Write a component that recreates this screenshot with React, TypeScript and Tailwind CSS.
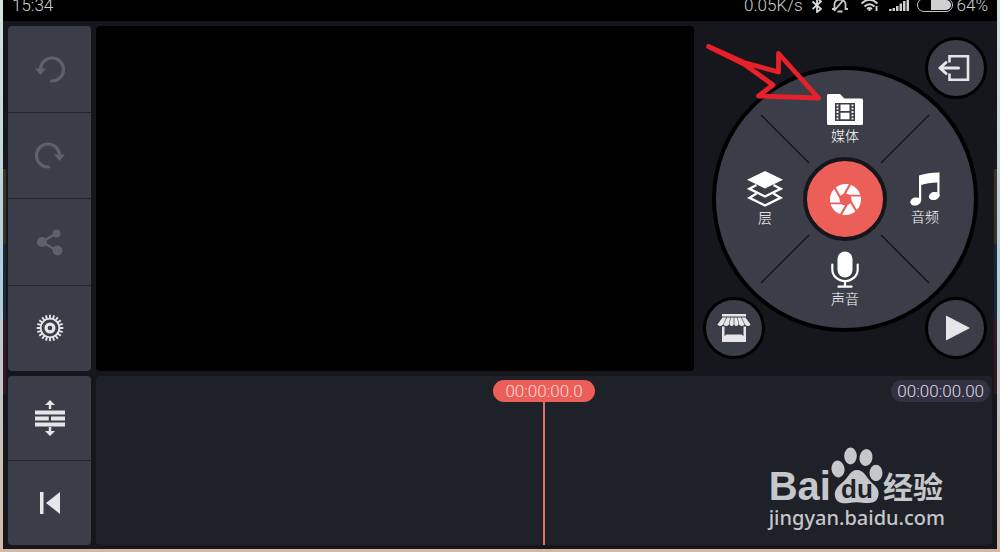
import type { ReactNode } from "react";

function RotateIcon({ flip = false }: { flip?: boolean }) {
  return (
    <svg width="32" height="32" viewBox="0 0 32 32" className={flip ? "-scale-x-100" : ""} aria-hidden="true">
      <path d="M6.500 16.500A11.500 11.500 0 1 1 17.500 28" fill="none" stroke="currentColor" strokeWidth="3.200" strokeLinecap="round" />
      <path d="M1 15.500h11l-5.500 6.500z" fill="currentColor" />
    </svg>
  );
}

function ShareIcon() {
  return (
    <svg width="28" height="28" viewBox="0 0 28 28" fill="currentColor" aria-hidden="true">
      <path d="M20 5.500L6 14L21 22.500" fill="none" stroke="currentColor" strokeWidth="2.500" />
      <circle cx="20.500" cy="5.500" r="4" />
      <circle cx="6" cy="14" r="5" />
      <circle cx="21.500" cy="22.500" r="5" />
    </svg>
  );
}

const teeth = Array.from({ length: 20 }, (_, i) => i * 18);

function GearIcon() {
  return (
    <svg width="28" height="28" viewBox="0 0 28 28" fill="none" stroke="currentColor" aria-hidden="true">
      <circle cx="14" cy="14" r="9.300" strokeWidth="1.800" />
      {teeth.map((a) => (
        <path key={a} d="M14 0.700V4.500" strokeWidth="1.900" transform={`rotate(${a} 14 14)`} />
      ))}
      <circle cx="14" cy="14" r="3.900" strokeWidth="3.200" />
    </svg>
  );
}

function TracksIcon() {
  return (
    <svg width="30" height="36" viewBox="0 0 30 36" fill="currentColor" aria-hidden="true">
      <path d="M15 0l5 5h-3.800v4h-2.400V5H10zM15 36l5-5h-3.800v-4h-2.400v4H10z" />
      <path d="M0 10.500h30v4H0zM0 16.500h13.800v4H0zM16 16.500h14v4H16zM0 22.500h30v4H0z" />
    </svg>
  );
}

function StartIcon() {
  return (
    <svg width="22" height="22" viewBox="0 0 22 22" fill="currentColor" aria-hidden="true">
      <path d="M1 0h3.500v22H1zM21 0v22L7 11z" />
    </svg>
  );
}

function MediaIcon() {
  return (
    <svg width="36" height="31" viewBox="0 0 36 31" aria-hidden="true">
      <path d="M1.500 0h11.500l4.500 4.500h17q1.500 0 1.500 1.500v23.500q0 1.500-1.500 1.500h-33q-1.500 0-1.500-1.500v-28q0-1.500 1.500-1.500z" fill="#fff" />
      <path d="M8 9h20v18H8z" fill="#3b3e48" />
      <path d="M13.500 10.500h9v6.500h-9zM13.500 18.800h9v6.500h-9z" fill="#fff" />
      <path d="M10.500 10.500v15.500M25.500 10.500v15.500" stroke="#fff" strokeWidth="1.800" strokeDasharray="1.800 1.500" />
    </svg>
  );
}

function LayersIcon() {
  return (
    <svg width="36" height="36" viewBox="0 0 36 36" fill="none" stroke="#fff" strokeWidth="2.400" aria-hidden="true">
      <path d="M18 0L36 8.800L18 17.600L0 8.800z" fill="#fff" stroke="none" />
      <path d="M9.500 14L2.500 17.800L18 25.500L33.500 17.800L26.500 14" />
      <path d="M9.500 22.500L2.500 26.800L18 34.500L33.500 26.800L26.500 22.500" />
    </svg>
  );
}

function MusicIcon() {
  return (
    <svg width="30" height="34" viewBox="0 0 30 34" fill="#fff" aria-hidden="true">
      <path d="M9 3.500Q18 0.500 29.500 0.500V24H27.300V10.500Q18 10.500 11.200 13V29H9z" />
      <ellipse cx="5.600" cy="29.500" rx="5.400" ry="4" transform="rotate(-14 5.600 29.500)" />
      <ellipse cx="24.200" cy="24" rx="5.400" ry="4" transform="rotate(-14 24.200 24)" />
    </svg>
  );
}

function MicIcon() {
  return (
    <svg width="28" height="37" viewBox="0 0 28 37" aria-hidden="true">
      <rect x="6.500" y="0.500" width="15" height="26" rx="7.500" fill="#fff" />
      <path d="M1.300 13.500V18.500a12.700 11.500 0 0 0 25.400 0V13.500M14 30V35.500M7.500 35.700h13" fill="none" stroke="#fff" strokeWidth="2.200" strokeLinecap="round" />
    </svg>
  );
}

function ShutterIcon() {
  return (
    <svg width="31" height="31" viewBox="2 2 20 20" fill="#fff" aria-hidden="true">
      <path d="M9.400 10.500l4.770-8.260C13.470 2.090 12.750 2 12 2c-2.400 0-4.600.85-6.320 2.250l3.660 6.350.06-.1zM21.540 9c-.92-2.920-3.150-5.260-6-6.340L11.880 9h9.660zm.26 1h-7.490l.29.5 4.760 8.250C21 16.970 22 14.610 22 12c0-.69-.07-1.350-.2-2zM8.540 12l-3.900-6.750C3.010 7.030 2 9.390 2 12c0 .69.070 1.350.2 2h7.490l-1.150-2zm-6.080 3c.92 2.920 3.150 5.260 6 6.340L12.120 15H2.460zm11.270 0l-3.900 6.760c.7.150 1.420.24 2.170.24 2.400 0 4.600-.85 6.320-2.250l-3.660-6.350-.93 1.600z" />
      <circle cx="12" cy="12" r="3.900" fill="#ec5f59" />
    </svg>
  );
}

function ExitIcon() {
  return (
    <svg width="32" height="28" viewBox="0 0 32 28" fill="none" stroke="currentColor" strokeWidth="2.600" aria-hidden="true">
      <path d="M11.500 8.500V2.300H30V25.700H11.500V19.500" />
      <path d="M20.500 14H2M8 8.500L2 14L8 19.500" strokeWidth="3" strokeLinecap="round" strokeLinejoin="round" />
    </svg>
  );
}

function StoreIcon() {
  return (
    <svg width="34" height="28" viewBox="0 0 34 28" fill="currentColor" aria-hidden="true">
      <path d="M5 0h24v2.500H5z" />
      <path d="M5.500 3.500H9.300L6 10.500Q3 13.500 0.500 10.500zM10 3.500h3.200L12 10.500Q9 13.500 6.500 10.500zM13.800 3.500h2.900V10.500Q15 13.500 12.500 10.500zM17.300 3.500H20.200L21.500 10.500Q19 13.500 17.300 10.500zM20.800 3.500h3.200L27.500 10.500Q25 13.500 22 10.500zM24.700 3.500h3.800L33.500 10.500Q31 13.500 28 10.500z" />
      <path d="M5 12.500h2.500V22L9.500 20.500H24.500L26.500 22V12.500H29V28H5z" />
    </svg>
  );
}

function PlayIcon() {
  return (
    <svg width="24" height="26" viewBox="0 0 24 26" fill="currentColor" aria-hidden="true">
      <path d="M0 0.500L24 13L0 25.500z" />
    </svg>
  );
}

function ToolButton({ label, disabled, children }: { label: string; disabled?: boolean; children: ReactNode }) {
  return (
    <button
      type="button"
      aria-label={label}
      disabled={disabled}
      className="flex flex-1 items-center justify-center border-b border-[#24262e] text-[#e6e6e8] last:border-b-0 disabled:text-[#5e616b]"
    >
      {children}
    </button>
  );
}

function WheelButton({ label, place, children }: { label: string; place: string; children: ReactNode }) {
  return (
    <button type="button" className={`relative flex flex-col items-center gap-0.5 pb-0.5 text-sm leading-4 font-light text-white ${place}`}>
      {children}
      <span>{label}</span>
    </button>
  );
}

function RoundButton({ label, place, children }: { label: string; place: string; children: ReactNode }) {
  return (
    <button
      type="button"
      aria-label={label}
      className={`absolute flex size-[62px] items-center justify-center rounded-full border-3 border-black bg-[#3b3e48] text-[#e6e6e8] ${place}`}
    >
      {children}
    </button>
  );
}

function StatusBar() {
  return (
    <header className="flex h-[21px] items-center overflow-hidden bg-black pr-[9px] pb-[11px] pl-[9px] font-[Roboto,sans-serif] text-[17px] leading-5 font-light text-[#d0d0d0]">
      <span className="flex-1">15:34</span>
      <span className="mr-2">0.05K/s</span>
      <svg width="12" height="16" viewBox="0 0 12 16" className="mr-2" fill="none" stroke="#d8d8d8" strokeWidth="1.800" aria-hidden="true">
        <path d="M1.500 4.500L10 12L6 15V1L10 4.500L1.500 12" />
      </svg>
      <svg width="18" height="16" viewBox="0 0 18 16" className="mr-3" fill="none" stroke="#c8c8c8" strokeWidth="1.800" aria-hidden="true">
        <path d="M1 12H3.500V7Q4 2.500 9 2.500Q14 2.500 14.500 7V12H17M6.500 14.500h5M15 0L3 14" />
      </svg>
      <svg width="18" height="14" viewBox="0 0 18 14" className="mr-[10px]" fill="none" stroke="#d8d8d8" strokeWidth="1.900" aria-hidden="true">
        <path d="M0.500 5.500Q8.500 -2 16.500 5.500M3.500 8.500Q8.500 4 13.500 8.500M6 11Q8.500 9 11 11" />
        <path d="M8.500 11v2M15.500 8v5" />
      </svg>
      <svg width="20" height="14" viewBox="0 0 20 14" className="mr-2" fill="#d0d0d0" aria-hidden="true">
        <path d="M0 11h2.500v2H0zM3.500 10h2.500v3H3.500zM7 8h2.500v5H7zM10.500 5.500h2.500v7.500h-2.500zM14 3h2.500v10H14zM17.500 0H20v13h-2.500z" />
      </svg>
      <span className="mr-1 flex h-[14px] w-9 shrink-0 justify-end rounded-full border border-[#c8c8c8] p-px">
        <span className="w-5 rounded-r-full bg-[#d0d0d0]" />
      </span>
      <span>64%</span>
    </header>
  );
}

function EdgeStrip() {
  return (
    <div className="flex w-[3px] flex-col" aria-hidden="true">
      <div className="h-[148px]" />
      <div className="h-[75px] bg-[#3a3323]" />
      <div className="h-[75px] bg-[#152a3c]" />
      <div className="h-[75px] bg-[#361726]" />
    </div>
  );
}

function Wheel() {
  return (
    <aside className="relative w-[298px] shrink-0 pt-10 pl-[18px]">
      <div className="relative grid size-[266px] grid-cols-3 grid-rows-3 place-items-center rounded-full border-4 border-black bg-[#3b3e48] p-[9px]">
        <svg className="absolute inset-0 size-full" viewBox="-129 -129 258 258" stroke="#15161b" strokeWidth="1.500" aria-hidden="true">
          <path d="M-84 -84L-36 -36M84 -84L36 -36M-84 84L-36 36M84 84L36 36" />
        </svg>
        <WheelButton label="媒体" place="col-start-2 row-start-1">
          <MediaIcon />
        </WheelButton>
        <WheelButton label="层" place="col-start-1 row-start-2">
          <LayersIcon />
        </WheelButton>
        <button
          type="button"
          aria-label="拍摄"
          className="relative col-start-2 row-start-2 flex size-[84px] items-center justify-center rounded-full border-4 border-[#15161b] bg-[#ec5f59]"
        >
          <ShutterIcon />
        </button>
        <WheelButton label="音频" place="col-start-3 row-start-2">
          <MusicIcon />
        </WheelButton>
        <WheelButton label="声音" place="col-start-2 row-start-3">
          <MicIcon />
        </WheelButton>
      </div>
      <RoundButton label="退出" place="top-[11px] right-[5px] pr-1">
        <ExitIcon />
      </RoundButton>
      <RoundButton label="商店" place="bottom-3 left-[9px]">
        <StoreIcon />
      </RoundButton>
      <RoundButton label="播放" place="right-[5px] bottom-3 pl-1">
        <PlayIcon />
      </RoundButton>
      <svg className="absolute top-4 left-3 overflow-visible" width="114" height="58" viewBox="0 0 114 58" aria-hidden="true">
        <path
          d="M2.500 4.500L38 20.500L72.500 30V11.500L112.500 56L52.500 54L67 43L38 22z"
          fill="none"
          stroke="#e8202a"
          strokeWidth="4.800"
          strokeLinejoin="round"
        />
      </svg>
    </aside>
  );
}

function Watermark() {
  return (
    <div className="absolute right-[47px] bottom-3.5 text-[#c6c7ca]">
      <div className="flex items-end">
        <span className="font-['Liberation_Sans',sans-serif] text-[40px] leading-9 font-bold">Bai</span>
        <span className="relative block h-[57px] w-[52px]">
          <svg width="52" height="57" viewBox="0 0 52 57" fill="currentColor" aria-hidden="true">
            <ellipse cx="7" cy="22" rx="6.500" ry="8.500" transform="rotate(-8 7 22)" />
            <ellipse cx="19.500" cy="9" rx="6.300" ry="8.500" />
            <ellipse cx="35" cy="10.500" rx="6.500" ry="8.500" transform="rotate(10 35 10.500)" />
            <ellipse cx="45" cy="26" rx="6.500" ry="8.300" />
            <path d="M26 23C33 23 35 30 41 36C46 40 49 44 47 50C45 57 38 56 33 56C28 55 23 55 18 56C12 57 5 56 4 49C3 43 7 39 12 35C17 31 19 23 26 23z" />
          </svg>
          <span className="absolute inset-x-0 bottom-0 text-center font-['Liberation_Sans',sans-serif] text-[26px] leading-[30px] font-bold text-[#1f2129]">du</span>
        </span>
        <span className="pb-1 font-['Noto_Sans_CJK_SC',sans-serif] text-[30px] leading-[30px] font-bold">经验</span>
      </div>
      <div className="font-['Noto_Sans',sans-serif] text-[20px] leading-[27px] font-medium">jingyan.baidu.com</div>
    </div>
  );
}

function Timeline() {
  return (
    <section aria-label="时间轴" className="relative flex flex-col items-center rounded-sm bg-[#1f2129] pt-1 font-[Roboto,sans-serif] text-[17px] leading-[22px] font-light">
      <time className="rounded-full bg-[#ec5f59] px-3 text-[#ffdcd8]">00:00:00.0</time>
      <div className="w-0.5 flex-1 bg-[#e36b6b]" />
      <time className="absolute top-1 right-0.5 rounded-full bg-[#343142] px-1.5 text-[#dcdbe2]">00:00:00.00</time>
      <Watermark />
    </section>
  );
}

export default function App() {
  return (
    <div className="flex min-h-screen flex-col bg-linear-to-b from-[#d5e3dc] via-[#b4cdd9] to-[#d3b9a4] px-[3px] pb-[3px] font-['Noto_Sans_CJK_SC',sans-serif]">
      <StatusBar />
      <main className="flex flex-1 bg-[#16171c]">
        <EdgeStrip />
        <div className="grid flex-1 grid-cols-[83px_1fr] grid-rows-[345fr_169fr] gap-[5px] px-0.5 pt-[5px] pb-1">
          <nav aria-label="工具" className="flex flex-col overflow-hidden rounded-sm bg-[#3b3e48]">
            <ToolButton label="撤销" disabled>
              <RotateIcon />
            </ToolButton>
            <ToolButton label="重做" disabled>
              <RotateIcon flip />
            </ToolButton>
            <ToolButton label="分享" disabled>
              <ShareIcon />
            </ToolButton>
            <ToolButton label="设置">
              <GearIcon />
            </ToolButton>
          </nav>
          <div className="flex">
            <section aria-label="预览" className="flex-1 rounded-sm bg-black" />
            <Wheel />
          </div>
          <nav aria-label="时间轴工具" className="flex flex-col overflow-hidden rounded-sm bg-[#3b3e48]">
            <ToolButton label="展开轨道">
              <TracksIcon />
            </ToolButton>
            <ToolButton label="回到开头">
              <StartIcon />
            </ToolButton>
          </nav>
          <Timeline />
        </div>
        <EdgeStrip />
      </main>
    </div>
  );
}
